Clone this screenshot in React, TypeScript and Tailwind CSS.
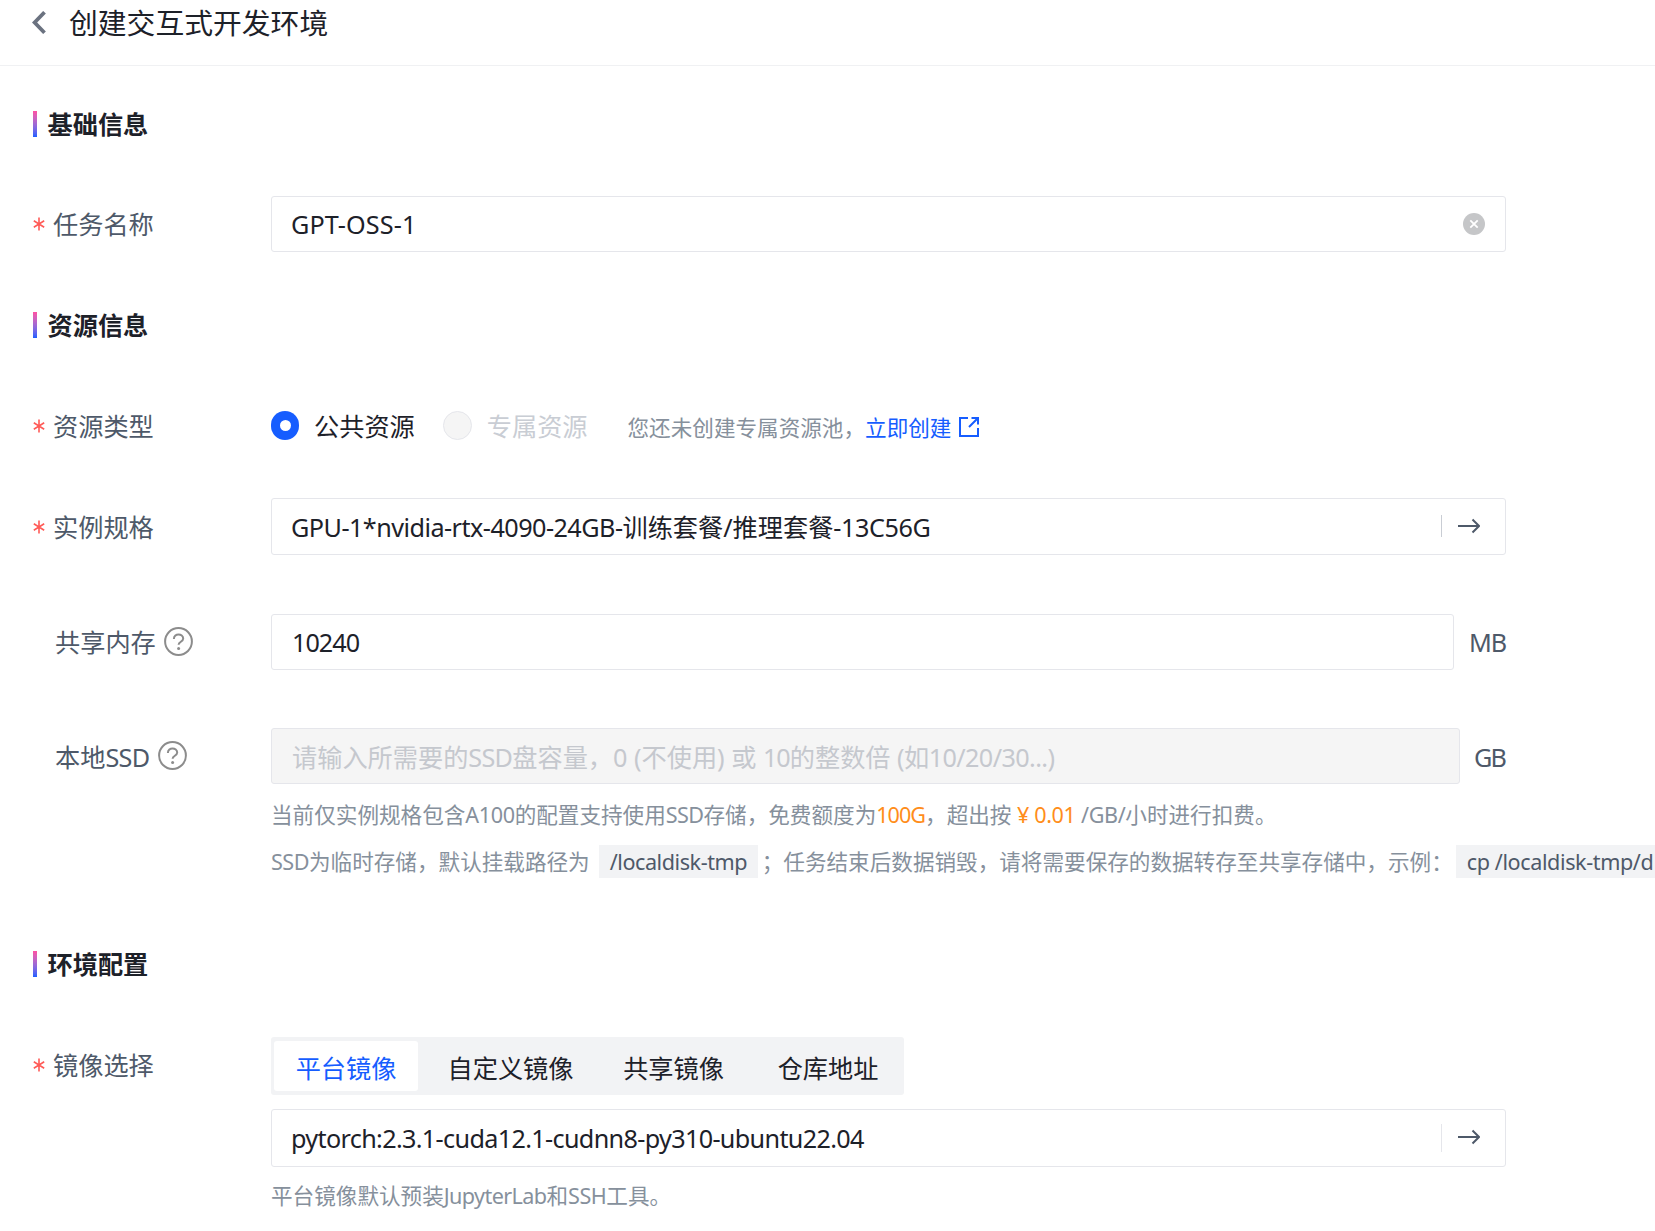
import type { ReactNode } from "react";

const IMAGE_TABS = [
  { id: "platform", label: "平台镜像", className: "w-[144px] bg-white text-[#165dff]" },
  { id: "custom", label: "自定义镜像", className: "w-[185px]" },
  { id: "shared", label: "共享镜像", className: "w-[141px]" },
  { id: "registry", label: "仓库地址", className: "ml-[9px] w-[150px]" },
];

function SectionTitle({ children, className = "" }: { children: ReactNode; className?: string }) {
  return (
    <div className={`flex h-[26px] items-center ${className}`}>
      <span className="h-full w-1 bg-linear-to-b from-[#ff4fa3] to-[#165dff]" />
      <h2 className="ml-[10.5px] text-[25.2px] leading-[26px] font-bold text-[#1d2129]">{children}</h2>
    </div>
  );
}

function Required() {
  return (
    <svg className="mr-2 h-3.5 w-3 shrink-0" viewBox="0 0 12 14" fill="none" stroke="#ff5b57" strokeWidth="1.6">
      <path d="M6 0.5v13M0.8 3.8l10.4 6.4M11.2 3.8L0.8 10.2" />
    </svg>
  );
}

function HelpIcon() {
  return (
    <svg className="mb-0.5 ml-2 h-[29px] w-[29px] shrink-0" viewBox="0 0 29 29" fill="none" stroke="#8c8c8c" strokeWidth="2">
      <circle cx="14.5" cy="14.5" r="13.4" />
      <path d="M9.9 11.9c0-6 9.3-5.8 9.3-.4 0 3.2-4.6 3.2-4.6 6.2" />
      <circle cx="14.6" cy="21.4" r="1.5" fill="#8c8c8c" stroke="none" />
    </svg>
  );
}

function ArrowIcon() {
  return (
    <svg className="mb-0.5 h-4 w-[22px]" viewBox="0 0 22 16" fill="none" stroke="#4e5969" strokeWidth="2">
      <path d="M0 8h21M14.5 1.5L21 8l-6.5 6.5" />
    </svg>
  );
}

interface FormRowProps {
  label: ReactNode;
  required?: boolean;
  help?: boolean;
  className?: string;
  labelClassName?: string;
  children: ReactNode;
}

function FormRow({ label, required, help, className = "", labelClassName = "h-14", children }: FormRowProps) {
  return (
    <div className={`flex ${className}`}>
      <div
        className={`flex w-[238px] shrink-0 items-center text-[25.2px] text-[#4e5969] ${labelClassName} ${required ? "" : "pl-[22px]"}`}
      >
        {required && <Required />}
        <span className="pt-0.5">{label}</span>
        {help && <HelpIcon />}
      </div>
      {children}
    </div>
  );
}

function Box({ className = "", children }: { className?: string; children: ReactNode }) {
  return (
    <div className={`flex items-center rounded-[3px] border border-[#e5e6eb] pl-[19px] text-[25.2px] text-[#1d2129] ${className}`}>
      {children}
    </div>
  );
}

export default function App() {
  return (
    <div className="h-[1231px] w-[1655px] overflow-hidden bg-white font-['Noto_Sans','Noto_Sans_CJK_SC',sans-serif] whitespace-nowrap">
      <header className="flex h-[66px] items-start border-b border-[#f0f1f3] pl-8">
        <svg className="mt-[11px] h-[23px] w-3.5" viewBox="0 0 14 23" fill="none" stroke="#6b7280" strokeWidth="3.8">
          <path d="M12.5 1.3L2.6 11.5l9.9 10.2" />
        </svg>
        <h1 className="ml-[23px] text-[28.8px] leading-[46px] text-[#1d2129]">创建交互式开发环境</h1>
      </header>

      <main className="pl-[33px]">
        <SectionTitle className="mt-[45px]">基础信息</SectionTitle>

        <FormRow label="任务名称" required className="mt-[59px]">
          <Box className="h-14 w-[1235px] justify-between pr-5">
            <span className="pt-0.5 tracking-[0.1px]">GPT-OSS-1</span>
            <svg className="h-[22px] w-[22px]" viewBox="0 0 22 22">
              <circle cx="11" cy="11" r="11" fill="#c5c6c8" />
              <path d="M7.3 7.3l7.4 7.4M14.7 7.3l-7.4 7.4" stroke="#fff" strokeWidth="1.8" />
            </svg>
          </Box>
        </FormRow>

        <SectionTitle className="mt-[60px]">资源信息</SectionTitle>

        <FormRow label="资源类型" required className="mt-[60px]">
          <div className="flex h-14 items-center text-[25.2px]">
            <span className="mb-px flex h-[29px] w-7 items-center justify-center rounded-full bg-[#165dff]">
              <span className="h-[11px] w-[11px] rounded-full bg-white" />
            </span>
            <span className="ml-[15px] pt-0.5 text-[#1d2129]">公共资源</span>
            <span className="mb-px ml-7 h-[29px] w-[29px] rounded-full border border-[#e5e6eb] bg-[#f5f5f5]" />
            <span className="ml-[15px] pt-0.5 text-[#c9cdd4]">专属资源</span>
            <span className="ml-10 pt-1 text-[21.6px] text-[#86909c]">您还未创建专属资源池，</span>
            <a className="flex items-center pt-1 text-[21.6px] text-[#165dff]">
              立即创建
              <svg className="mb-px ml-2 h-5 w-5" viewBox="0 0 20 20" fill="none" stroke="#165dff" strokeWidth="2">
                <path d="M9 1H1v18h18v-8M12.5 1H19v6.5M19 1l-9 9" />
              </svg>
            </a>
          </div>
        </FormRow>

        <FormRow label="实例规格" required className="mt-[44px]" labelClassName="h-[57px]">
          <Box className="h-[57px] w-[1235px] justify-between pr-[25px]">
            <span className="pt-0.5">
              <span className="tracking-[-0.53px]">GPU-1*nvidia-rtx-4090-24GB-</span>训练套餐/推理套餐
              <span className="tracking-[-0.4px]">-13C56G</span>
            </span>
            <span className="flex items-center gap-4">
              <span className="mb-0.5 h-[22px] w-px bg-[#c9cdd4]" />
              <ArrowIcon />
            </span>
          </Box>
        </FormRow>

        <FormRow label="共享内存" help className="mt-[59px]">
          <Box className="h-14 w-[1183px]">
            <span className="pt-0.5 pl-px tracking-[-1px]">10240</span>
          </Box>
          <span className="ml-[15px] flex items-center pt-0.5 text-[25.2px] tracking-[-1.2px] text-[#4e5969]">MB</span>
        </FormRow>

        <FormRow
          label={<>本地<span className="tracking-[-0.6px]">SSD</span></>}
          help
          className="mt-[58px]"
          labelClassName="h-[57px]"
        >
          <Box className="h-14 w-[1189px] bg-[#f5f5f5]">
            <span className="pt-[3px] pl-px text-[#c5c8ce]">
              请输入所需要的<span className="tracking-[-0.7px]">SSD</span>盘容量，0 (不使用) 或{" "}
              <span className="tracking-[-1px]">10</span>的整数倍 <span className="tracking-[-0.6px]">(如10/20/30...)</span>
            </span>
          </Box>
          <span className="ml-[14px] flex items-center pt-0.5 text-[25.2px] tracking-[-1.8px] text-[#4e5969]">GB</span>
        </FormRow>

        <div className="ml-[238px] text-[21.6px] text-[#86909c]">
          <p className="mt-[13px] h-[33px] leading-[33px]">
            当前仅实例规格包含<span className="tracking-[-0.4px]">A100</span>的配置支持使用
            <span className="tracking-[-0.6px]">SSD</span>存储，免费额度为
            <span className="tracking-[-1px] text-[#ff8d1a]">100G</span>，超出按{" "}
            <span className="tracking-[-0.4px] text-[#ff8d1a]">¥ 0.01</span>{" "}
            <span className="tracking-[-0.4px]">/GB/</span>小时进行扣费。
          </p>
          <p className="mt-[14px] flex h-[33px] items-center">
            <span className="pt-0.5"><span className="tracking-[-0.5px]">SSD</span>为临时存储，默认挂载路径为</span>
            <code className="ml-[9px] flex h-[33px] w-[159px] shrink-0 items-center bg-[#f2f3f5] pt-0.5 pl-[11px] font-['Noto_Sans'] tracking-[-0.45px] text-[#4e5969]">
              /localdisk-tmp
            </code>
            <span className="ml-[4px] pt-0.5">；任务结束后数据销毁，请将需要保存的数据转存至共享存储中，示例：</span>
            <code className="ml-[3px] flex h-[33px] w-[200px] shrink-0 items-center bg-[#f2f3f5] pt-0.5 pl-[11px] font-['Noto_Sans'] tracking-[-0.4px] text-[#4e5969]">
              cp /localdisk-tmp/d
            </code>
          </p>
        </div>

        <SectionTitle className="mt-[73px]">环境配置</SectionTitle>

        <FormRow label="镜像选择" required className="mt-[60px]">
          <div>
            <div className="flex h-[58px] w-[633px] items-center rounded-[3px] bg-[#f2f3f5] pl-[3px] text-[25.2px] text-[#1d2129]">
              {IMAGE_TABS.map((tab) => (
                <button key={tab.id} className={`h-[50px] rounded-[3px] pt-1.5 ${tab.className}`}>
                  {tab.label}
                </button>
              ))}
            </div>
            <Box className="mt-[14px] h-[58px] w-[1235px] justify-between pr-[25px]">
              <span className="pt-0.5 tracking-[-0.66px]">pytorch:2.3.1-cuda12.1-cudnn8-py310-ubuntu22.04</span>
              <span className="flex items-center gap-4">
                <span className="h-7 w-px bg-[#e5e6eb]" />
                <ArrowIcon />
              </span>
            </Box>
            <p className="mt-3 text-[21.6px] leading-[33px] text-[#86909c]">
              平台镜像默认预装<span className="tracking-[-0.6px]">JupyterLab</span>和
              <span className="tracking-[-0.5px]">SSH</span>工具。
            </p>
          </div>
        </FormRow>
      </main>
    </div>
  );
}
